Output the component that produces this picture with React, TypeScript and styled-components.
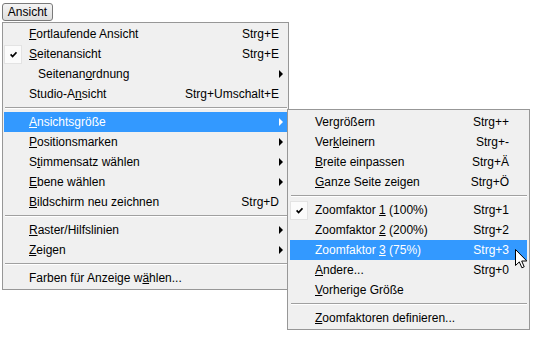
import React from 'react';
import styled, { createGlobalStyle } from 'styled-components';

type Entry =
  | { kind: 'sep' }
  | {
      kind: 'item';
      label: string;
      shortcut?: string;
      sub?: boolean;
      checked?: boolean;
      active?: boolean;
      indent?: boolean;
    };

const sep: Entry = { kind: 'sep' };

const mainMenu: Entry[] = [
  { kind: 'item', label: '&Fortlaufende Ansicht', shortcut: 'Strg+E' },
  { kind: 'item', label: '&Seitenansicht', shortcut: 'Strg+E', checked: true },
  { kind: 'item', label: 'Seitenan&ordnung', sub: true, indent: true },
  { kind: 'item', label: 'Studio-A&nsicht', shortcut: 'Strg+Umschalt+E' },
  sep,
  { kind: 'item', label: '&Ansichtsgröße', sub: true, active: true },
  { kind: 'item', label: '&Positionsmarken', sub: true },
  { kind: 'item', label: 'S&timmensatz wählen', sub: true },
  { kind: 'item', label: '&Ebene wählen', sub: true },
  { kind: 'item', label: '&Bildschirm neu zeichnen', shortcut: 'Strg+D' },
  sep,
  { kind: 'item', label: '&Raster/Hilfslinien', sub: true },
  { kind: 'item', label: '&Zeigen', sub: true },
  sep,
  { kind: 'item', label: 'Farben für Anzeige w&ählen...' },
];

const zoomMenu: Entry[] = [
  { kind: 'item', label: 'Ver&größern', shortcut: 'Strg++' },
  { kind: 'item', label: 'Ver&kleinern', shortcut: 'Strg+-' },
  { kind: 'item', label: '&Breite einpassen', shortcut: 'Strg+Ä' },
  { kind: 'item', label: '&Ganze Seite zeigen', shortcut: 'Strg+Ö' },
  sep,
  { kind: 'item', label: 'Zoomfaktor &1 (100%)', shortcut: 'Strg+1', checked: true },
  { kind: 'item', label: 'Zoomfaktor &2 (200%)', shortcut: 'Strg+2' },
  { kind: 'item', label: 'Zoomfaktor &3 (75%)', shortcut: 'Strg+3', active: true },
  { kind: 'item', label: '&Andere...', shortcut: 'Strg+0' },
  { kind: 'item', label: '&Vorherige Größe' },
  sep,
  { kind: 'item', label: '&Zoomfaktoren definieren...' },
];

// "&x" marks the mnemonic letter, like a Windows resource string
const Label: React.FC<{ text: string }> = ({ text }) => {
  const i = text.indexOf('&');
  if (i < 0) return <>{text}</>;
  return (
    <>
      {text.slice(0, i)}
      <u>{text[i + 1]}</u>
      {text.slice(i + 2)}
    </>
  );
};

const MenuList: React.FC<{ entries: Entry[]; tail: number }> = ({ entries, tail }) => (
  <>
    {entries.map((e, n) =>
      e.kind === 'sep' ? (
        <Separator key={n} />
      ) : (
        <Row key={n} $active={!!e.active}>
          <CheckCell>
            {e.checked && (
              <CheckBox>
                <svg width="7" height="7" viewBox="0 0 7 7">
                  <path d="M0.6 3.4 L2.6 5.6 L6.5 1.2" fill="none" stroke="#000" strokeWidth="1.7" />
                </svg>
              </CheckBox>
            )}
          </CheckCell>
          <ItemText $indent={!!e.indent}>
            <Label text={e.label} />
          </ItemText>
          {e.shortcut && <Shortcut>{e.shortcut}</Shortcut>}
          <ArrowCell $w={tail}>{e.sub && <Arrow $active={!!e.active} />}</ArrowCell>
        </Row>
      )
    )}
  </>
);

export default function App() {
  return (
    <Page>
      <GlobalStyle />
      <MenuBarButton>Ansicht</MenuBarButton>
      <MainMenu>
        <MenuList entries={mainMenu} tail={8} />
      </MainMenu>
      <SubMenu>
        <MenuList entries={zoomMenu} tail={18} />
      </SubMenu>
      <Cursor width="13" height="20" viewBox="0 0 13 20">
        <path
          d="M0.5 0.5 L0.5 16.5 L4.3 12.9 L6.9 18.8 L9.2 17.8 L6.7 12 L11.8 12 Z"
          fill="#fff"
          stroke="#000"
          strokeWidth="1"
          strokeLinejoin="miter"
        />
      </Cursor>
    </Page>
  );
}

const GlobalStyle = createGlobalStyle`
  body {
    margin: 0;
    background: #ffffff;
  }
`;

const Page = styled.div`
  position: relative;
  width: 538px;
  height: 339px;
  padding: 3px 0 0 2px;
  box-sizing: border-box;
  font-family: 'Liberation Sans', Arial, sans-serif;
  font-size: 12px;
  color: #000;
`;

const MenuBarButton = styled.div`
  width: 51px;
  height: 18px;
  box-sizing: border-box;
  border: 1px solid #7a7a7a;
  border-radius: 3px;
  background: linear-gradient(#f4f4f4, #dedede);
  display: flex;
  align-items: center;
  justify-content: center;
  line-height: 16px;
`;

const MenuBox = styled.div`
  box-sizing: border-box;
  border: 1px solid #979797;
  background: #f0f0f0;
  display: flex;
  flex-direction: column;
`;

const MainMenu = styled(MenuBox)`
  margin-top: 1px;
  width: 287px;
  padding: 1px 1px 1px 1px;
`;

const SubMenu = styled(MenuBox)`
  position: absolute;
  left: 287px;
  top: 109px;
  width: 243px;
  padding: 2px 2px 1px 2px;
`;

const Row = styled.div<{ $active: boolean }>`
  display: flex;
  align-items: center;
  height: 20px;
  background: ${(p) => (p.$active ? '#3399ff' : 'transparent')};
  color: ${(p) => (p.$active ? '#ffffff' : '#000000')};
  white-space: nowrap;
`;

const CheckCell = styled.div`
  width: 25px;
  height: 20px;
  flex: none;
  display: flex;
  align-items: center;
`;

const CheckBox = styled.div`
  width: 18px;
  height: 19px;
  box-sizing: border-box;
  border: 1px solid #e3e3e3;
  background: #fbfbfb;
  display: flex;
  align-items: center;
  justify-content: center;
`;

const ItemText = styled.span<{ $indent: boolean }>`
  flex: 1;
  padding-left: ${(p) => (p.$indent ? 9 : 0)}px;
`;

const Shortcut = styled.span`
  flex: none;
`;

const ArrowCell = styled.div<{ $w: number }>`
  width: ${(p) => p.$w}px;
  flex: none;
  display: flex;
  align-items: center;
  justify-content: flex-start;
`;

const Arrow = styled.span<{ $active: boolean }>`
  width: 0;
  height: 0;
  border-top: 4px solid transparent;
  border-bottom: 4px solid transparent;
  border-left: 4px solid ${(p) => (p.$active ? '#ffffff' : '#000000')};
`;

const Separator = styled.div`
  height: 8px;
  flex: none;
  box-sizing: border-box;
  padding: 3px 0 0 1px;

  &::before {
    content: '';
    display: block;
    height: 1px;
    background: #a0a0a0;
    border-bottom: 1px solid #ffffff;
  }
`;

const Cursor = styled.svg`
  position: absolute;
  left: 515px;
  top: 249px;
`;
